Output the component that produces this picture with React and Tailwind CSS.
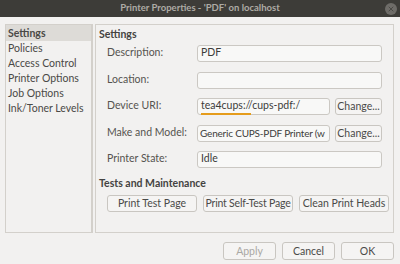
import { X } from "lucide-react";

const font = { fontFamily: 'Lato, "Open Sans", sans-serif' };

const pages = ["Settings", "Policies", "Access Control", "Printer Options", "Job Options", "Ink/Toner Levels"];

function Btn({ children, className = "", disabled }) {
  return (
    <button
      className={`flex h-[17px] items-center justify-center whitespace-nowrap rounded-[3px] border border-[#c9c6c1] bg-[#f5f4f3] text-[10.5px] leading-none ${disabled ? "text-[#aaa8a4]" : "text-[#4a4a48]"} ${className}`}
    >
      {children}
    </button>
  );
}

function Field({ label, children, className = "" }) {
  return (
    <div className={`flex h-[17px] items-center ${className}`}>
      <span className="w-[90px] shrink-0 text-[10.5px] text-[#55534f]">{label}</span>
      {children}
    </div>
  );
}

function Input({ value, className = "w-[185px] px-[3px]" }) {
  return (
    <div className={`flex h-[17px] items-center overflow-hidden whitespace-nowrap rounded-[3px] border border-[#cbc8c3] bg-[#f8f8f7] text-[10.5px] text-[#3c3c3a] ${className}`}>
      {value}
    </div>
  );
}

export default function App() {
  return (
    <div className="flex h-[264px] w-[400px] flex-col bg-[#f2f1f0]" style={font}>
      <div className="grid h-[17px] grid-cols-[1fr_auto_1fr] items-center bg-[#3d3c38]">
        <div />
        <span className="text-[9.5px] font-bold text-[#aeaba5]">Printer Properties - 'PDF' on localhost</span>
        <div className="flex justify-end pr-[3px]">
          <span className="flex h-[12px] w-[12px] items-center justify-center rounded-full bg-[#6e6c68]">
            <X size={8} strokeWidth={3} className="text-[#4a4945]" />
          </span>
        </div>
      </div>

      <div className="mt-[7px] flex h-[209px] pl-[5px]">
        <div className="w-[88px] border border-r-2 border-[#d3d0cb] bg-[#f2f1f0]">
          {pages.map((p, i) => (
            <div
              key={p}
              className={`flex h-[15px] items-center pl-[2px] text-[10.5px] leading-none text-[#4a4946] ${i === 0 ? "h-[16px] bg-[#dddbd7] font-bold" : ""}`}
            >
              {p}
            </div>
          ))}
        </div>

        <div className="ml-[2px] w-[299px] border border-[#d3d0cb] pl-[3px]">
          <div className="mt-[2px] text-[10.5px] font-bold text-[#444341]">Settings</div>
          <div className="pl-[8px]">
            <Field label="Description:" className="mt-[2px]">
              <Input value="PDF" />
            </Field>
            <Field label="Location:" className="mt-[10px]">
              <Input value="" />
            </Field>
            <Field label="Device URI:" className="mt-[9px]">
              <div className="relative">
                <Input value="tea4cups://cups-pdf:/" className="w-[133px] px-[3px]" />
                <div className="absolute left-[4px] top-[15px] h-[2px] w-[50px] bg-[#e59c1c]" />
              </div>
              <Btn className="ml-[5px] w-[47px]">Change...</Btn>
            </Field>
            <Field label="Make and Model:" className="mt-[10px]">
              <Input value="Generic CUPS-PDF Printer (w" className="w-[133px] px-[2px] text-[10px] tracking-[-0.2px]" />
              <Btn className="ml-[5px] w-[47px]">Change...</Btn>
            </Field>
            <Field label="Printer State:" className="mt-[9px]">
              <Input value="Idle" />
            </Field>
          </div>
          <div className="mt-[8px] text-[10.5px] font-bold text-[#444341]">Tests and Maintenance</div>
          <div className="mt-[3px] flex gap-[6px] pl-[8px]">
            <Btn className="w-[90px]">Print Test Page</Btn>
            <Btn className="w-[90px] tracking-[-0.2px]">Print Self-Test Page</Btn>
            <Btn className="w-[90px]">Clean Print Heads</Btn>
          </div>
        </div>
      </div>

      <div className="mt-[9px] flex justify-end gap-[6px] pr-[6px]">
        <Btn className="h-[18px] w-[53px]" disabled>Apply</Btn>
        <Btn className="h-[18px] w-[53px]">Cancel</Btn>
        <Btn className="h-[18px] w-[53px]">OK</Btn>
      </div>
    </div>
  );
}
